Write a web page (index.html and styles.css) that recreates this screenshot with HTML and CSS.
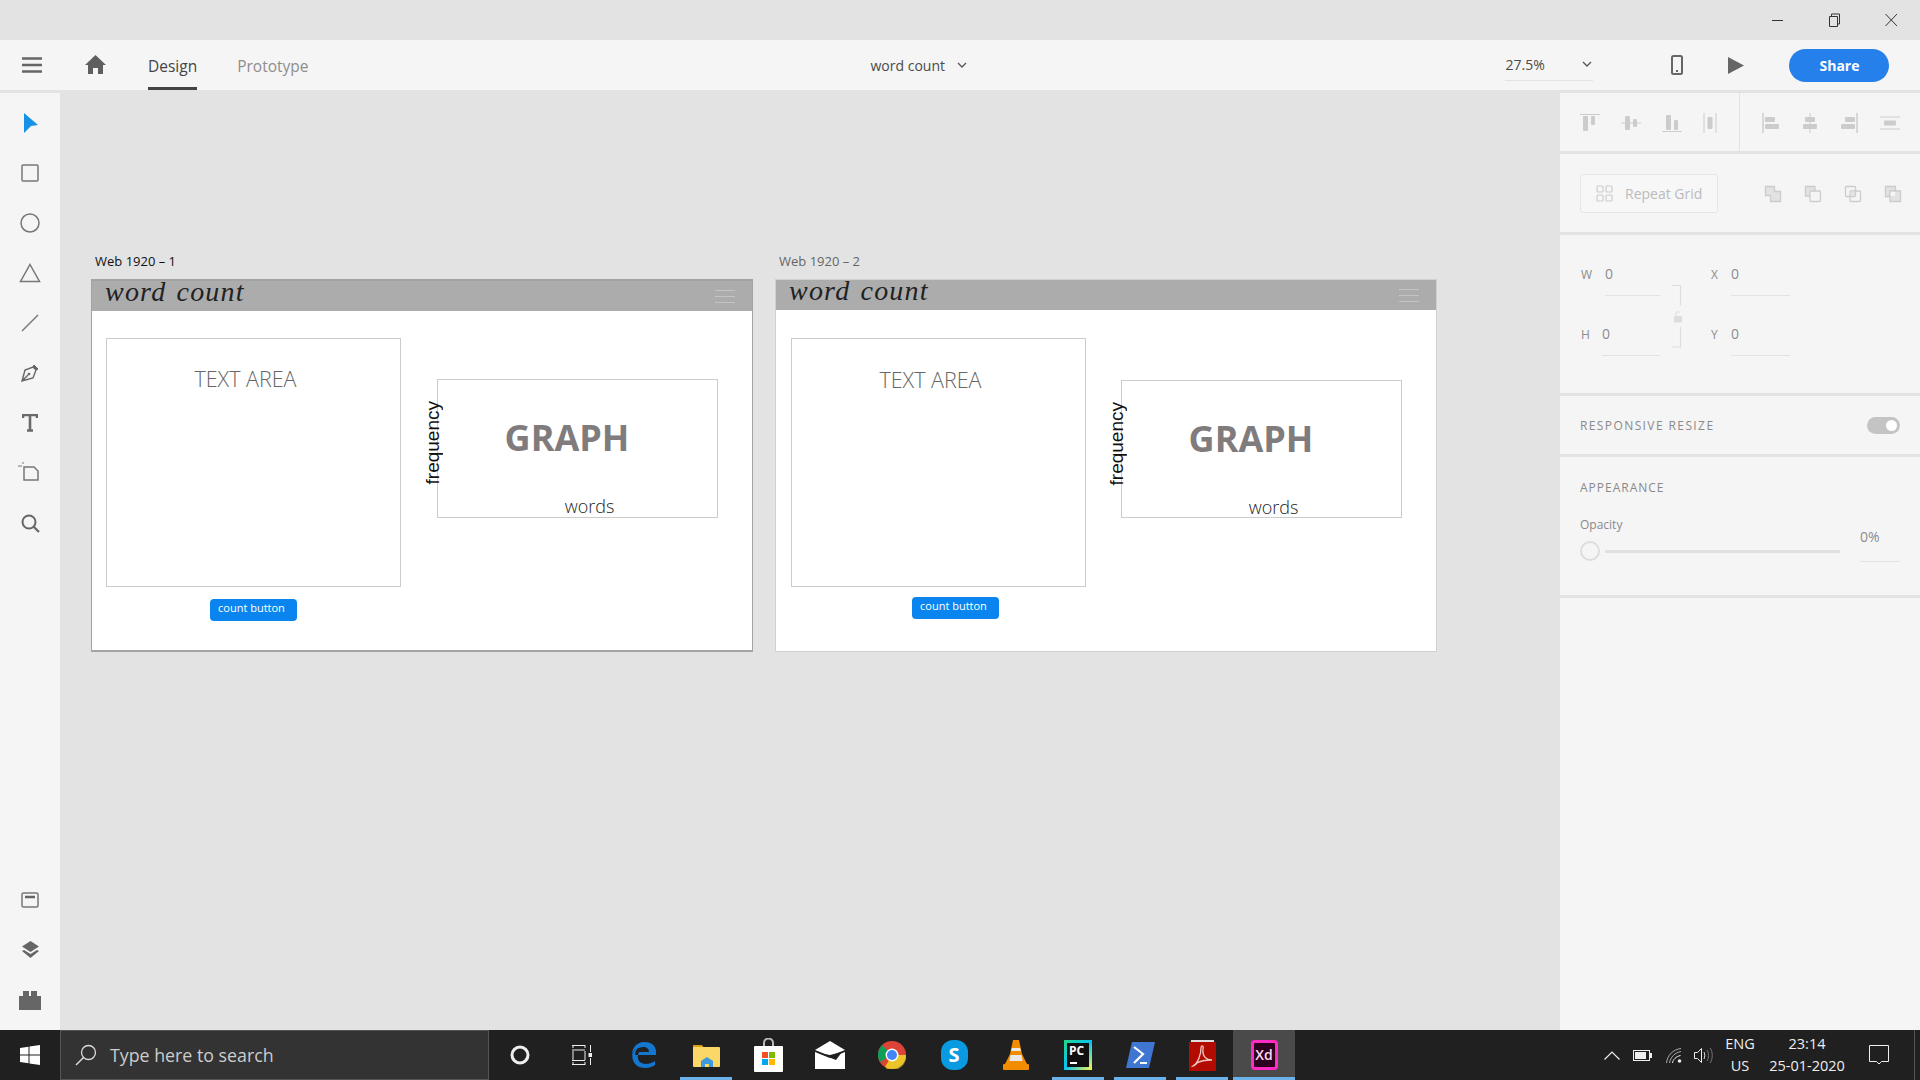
FILE: index.html
```html
<!DOCTYPE html>
<html lang="en">
<head>
    <meta charset="UTF-8">
    <title>word count - Adobe XD</title>
    <link rel="stylesheet" href="styles.css">
</head>
<body>
<div class="app">
    <div class="titlebar">
        <svg class="win-btn" width="14" height="14" viewBox="0 0 14 14"><path d="M1 7.5h11" stroke="#333" fill="none"/></svg>
        <svg class="win-btn win-restore" width="14" height="14" viewBox="0 0 14 14"><path d="M2.5 3.5h8v10h-8zM4.500 3.500v-2.500h8v10h-2" stroke="#333" fill="none"/></svg>
        <svg class="win-btn win-close" width="14" height="14" viewBox="0 0 14 14"><path d="M1.500 1l11.500 12M13 1L1.500 13" stroke="#333" fill="none"/></svg>
    </div>

    <div class="toolbar">
        <svg class="menu-icon" width="20" height="16" viewBox="0 0 20 16"><path d="M0 1.500h20M0 8h20M0 14.500h20" stroke="#666" stroke-width="2.400" fill="none"/></svg>
        <svg class="home-icon" width="21" height="19" viewBox="0 0 21 19"><path d="M10.500 0L21 10h-3v9h-5v-6H8v6H3v-9H0z" fill="#5f5f5f"/></svg>
        <div class="tab tab-active">Design</div>
        <div class="tab">Prototype</div>
        <div class="doc-title">word count
            <svg width="10" height="7" viewBox="0 0 10 7"><path d="M1 1l4 4 4-4" stroke="#555" stroke-width="1.300" fill="none"/></svg>
        </div>
        <div class="zoom-select">27.5%
            <svg width="10" height="7" viewBox="0 0 10 7"><path d="M1 1l4 4 4-4" stroke="#555" stroke-width="1.300" fill="none"/></svg>
        </div>
        <svg class="phone-icon" width="12" height="20" viewBox="0 0 12 20"><rect x="1" y="1" width="10" height="18" rx="1.500" stroke="#666" stroke-width="2" fill="none"/><path d="M5 16h2" stroke="#666" stroke-width="2"/></svg>
        <svg class="play-icon" width="16" height="17" viewBox="0 0 16 17"><path d="M0 0l16 8.500L0 17z" fill="#666"/></svg>
        <button class="share">Share</button>
    </div>

    <div class="main">
        <div class="rail">
            <div class="rail-item"><svg width="16" height="20" viewBox="0 0 16 20"><path d="M2 0l14 12-7 1-7 7z" fill="#1592e6"/></svg></div>
            <div class="rail-item"><svg width="18" height="18" viewBox="0 0 18 18"><rect x="1" y="1" width="16" height="16" rx="1" stroke="#777" stroke-width="1.500" fill="none"/></svg></div>
            <div class="rail-item"><svg width="20" height="20" viewBox="0 0 20 20"><circle cx="10" cy="10" r="9" stroke="#777" stroke-width="1.500" fill="none"/></svg></div>
            <div class="rail-item"><svg width="22" height="20" viewBox="0 0 22 20"><path d="M11 1.500l9.500 17h-19z" stroke="#777" stroke-width="1.500" fill="none"/></svg></div>
            <div class="rail-item"><svg width="18" height="18" viewBox="0 0 18 18"><path d="M1 17L17 1" stroke="#777" stroke-width="1.500" fill="none"/></svg></div>
            <div class="rail-item"><svg width="20" height="20" viewBox="0 0 20 20"><path d="M14 2l4 4-2 1-3-3z" fill="#666" stroke="#666"/><path d="M13 4l3 3-3 8-11 3 3-11zM2 18l6-6" stroke="#666" stroke-width="1.400" fill="none"/><circle cx="9" cy="11" r="1.300" fill="#666"/></svg></div>
            <div class="rail-item"><svg width="16" height="18" viewBox="0 0 16 18"><path d="M1 4V1h14v3M8 1v15M5 16.500h6" stroke="#6a6a6a" stroke-width="2.600" fill="none"/></svg></div>
            <div class="rail-item rail-artboard"><svg width="22" height="20" viewBox="0 0 22 20"><path d="M6 5h10l4 4v9H6z" stroke="#777" stroke-width="1.500" fill="none"/><path d="M0 4h4M5 0v2" stroke="#777" stroke-width="1"/></svg></div>
            <div class="rail-item"><svg width="19" height="19" viewBox="0 0 19 19"><circle cx="8" cy="8" r="6.500" stroke="#666" stroke-width="2" fill="none"/><path d="M12.500 12.500l5.500 5.500" stroke="#666" stroke-width="2.200"/></svg></div>
            <div class="rail-spacer"></div>
            <div class="rail-item"><svg width="18" height="16" viewBox="0 0 18 16"><rect x="1" y="1" width="16" height="14" rx="1.500" stroke="#777" stroke-width="1.500" fill="none"/><path d="M4 5h10" stroke="#666" stroke-width="2.500"/></svg></div>
            <div class="rail-item"><svg width="19" height="18" viewBox="0 0 19 18"><path d="M9.500 0L18 5.500 9.500 11 1 5.500z" fill="#666"/><path d="M1 10l2-1 6.500 4 6.500-4 2 1-8.500 7z" fill="#666"/></svg></div>
            <div class="rail-item"><svg width="22" height="19" viewBox="0 0 22 19"><path d="M4 5V0h6v5h2V0h6v5h4v14H0V5z" fill="#666"/></svg></div>
        </div>

        <div class="canvas">
            <div class="board-label label-one">Web 1920 – 1</div>
            <div class="board board-one">
                <div class="board-header">
                    <span class="board-title">word count</span>
                    <span class="burger"><i></i><i></i><i></i></span>
                </div>
                <div class="board-body">
                    <div class="text-col">
                        <div class="text-area"><span>TEXT AREA</span></div>
                        <div class="count-btn">count button</div>
                    </div>
                    <div class="graph">
                        <span class="freq">frequency</span>
                        <span class="graph-title">GRAPH</span>
                        <span class="graph-words">words</span>
                    </div>
                </div>
            </div>

            <div class="board-label label-two">Web 1920 – 2</div>
            <div class="board board-two">
                <div class="board-header">
                    <span class="board-title">word count</span>
                    <span class="burger"><i></i><i></i><i></i></span>
                </div>
                <div class="board-body">
                    <div class="text-col">
                        <div class="text-area"><span>TEXT AREA</span></div>
                        <div class="count-btn">count button</div>
                    </div>
                    <div class="graph">
                        <span class="freq">frequency</span>
                        <span class="graph-title">GRAPH</span>
                        <span class="graph-words">words</span>
                    </div>
                </div>
            </div>
        </div>

        <div class="panel">
            <div class="panel-sec sec-align">
                <div class="align-group">
                    <svg width="20" height="18" viewBox="0 0 20 18"><path d="M0 .500h20" stroke="#ccc"/><rect x="3" y="2" width="5" height="15" rx="1" fill="#ccc"/><rect x="11" y="2" width="4" height="9" rx="1" fill="#ccc"/></svg>
                    <svg width="20" height="18" viewBox="0 0 20 18"><path d="M0 9h20" stroke="#ccc"/><rect x="4" y="2" width="5" height="14" rx="1" fill="#ccc"/><rect x="12" y="5" width="4" height="8" rx="1" fill="#ccc"/></svg>
                    <svg width="20" height="18" viewBox="0 0 20 18"><path d="M0 17.500h20" stroke="#ccc"/><rect x="4" y="1" width="5" height="15" rx="1" fill="#ccc"/><rect x="12" y="6" width="4" height="10" rx="1" fill="#ccc"/></svg>
                    <svg width="14" height="20" viewBox="0 0 14 20"><path d="M1 0v20M13 0v20" stroke="#ccc"/><rect x="4.500" y="4" width="5" height="12" rx="1" fill="#ccc"/></svg>
                </div>
                <div class="align-group align-right">
                    <svg width="18" height="20" viewBox="0 0 18 20"><path d="M1 0v20" stroke="#ccc" stroke-width="1.500"/><rect x="3" y="4" width="10" height="5" rx="1" fill="#ccc"/><rect x="3" y="11" width="14" height="5" rx="1" fill="#ccc"/></svg>
                    <svg width="16" height="20" viewBox="0 0 16 20"><path d="M8 0v20" stroke="#ccc"/><rect x="3" y="4" width="10" height="5" rx="1" fill="#ccc"/><rect x="1" y="11" width="14" height="5" rx="1" fill="#ccc"/></svg>
                    <svg width="18" height="20" viewBox="0 0 18 20"><path d="M17 0v20" stroke="#ccc" stroke-width="1.500"/><rect x="5" y="4" width="10" height="5" rx="1" fill="#ccc"/><rect x="1" y="11" width="14" height="5" rx="1" fill="#ccc"/></svg>
                    <svg width="20" height="14" viewBox="0 0 20 14"><path d="M0 1h20M0 13h20" stroke="#ccc"/><rect x="4" y="4.500" width="12" height="5" rx="1" fill="#ccc"/></svg>
                </div>
            </div>

            <div class="panel-sec sec-grid">
                <div class="repeat-grid">
                    <svg width="17" height="17" viewBox="0 0 17 17"><g stroke="#ccc" stroke-width="1.200" fill="none"><rect x="1" y="1" width="6" height="6" rx="1"/><rect x="10" y="1" width="6" height="6" rx="1"/><rect x="1" y="10" width="6" height="6" rx="1"/><rect x="10" y="10" width="6" height="6" rx="1"/></g></svg>
                    Repeat Grid
                </div>
                <div class="bool-group">
                    <svg width="18" height="18" viewBox="0 0 18 18"><path d="M1.500 1.500h9v5h6v10h-10v-6h-5z" fill="#e2e2e2" stroke="#ccc" stroke-width="1.300"/></svg>
                    <svg width="18" height="18" viewBox="0 0 18 18"><path d="M6 11H1.500V1.500H11V6" fill="#e2e2e2" stroke="#ccc" stroke-width="1.300"/><rect x="6" y="6" width="10.500" height="10.500" rx="1" fill="#f5f5f5" stroke="#ccc" stroke-width="1.300"/></svg>
                    <svg width="18" height="18" viewBox="0 0 18 18"><g fill="none" stroke="#ccc" stroke-width="1.300"><rect x="1.500" y="1.500" width="10" height="10" rx="1"/><rect x="6" y="6" width="10.500" height="10.500" rx="1"/></g><rect x="6.500" y="6.500" width="4.500" height="4.500" fill="#e2e2e2"/></svg>
                    <svg width="18" height="18" viewBox="0 0 18 18"><path d="M1.500 1.500h10v4.500h-5.500v5.500h-4.500z" fill="#e2e2e2" stroke="#ccc" stroke-width="1.300"/><path d="M6 6h10.500v10.500h-10.500z" fill="#e2e2e2" stroke="#ccc" stroke-width="1.300"/><rect x="6.700" y="6.700" width="4.300" height="4.300" fill="#f5f5f5"/></svg>
                </div>
            </div>

            <div class="panel-sec sec-fields">
                <div class="field-col">
                    <div class="field"><span class="field-key">W</span><span class="field-val field-w">0</span></div>
                    <div class="field"><span class="field-key">H</span><span class="field-val field-h">0</span></div>
                </div>
                <svg class="lock" width="10" height="63" viewBox="0 0 10 63"><path d="M0 .500h8.500v20M0 62h8.500v-20" stroke="#ddd" stroke-width="1.200" fill="none"/><rect x="5" y="31" width="8" height="6.500" rx="1" fill="#ddd" transform="translate(-3 0)"/><path d="M4 31v-3a1.800 1.800 0 0 1 3.500 0" stroke="#ddd" fill="none"/></svg>
                <div class="field-col field-col-right">
                    <div class="field"><span class="field-key">X</span><span class="field-val">0</span></div>
                    <div class="field"><span class="field-key">Y</span><span class="field-val">0</span></div>
                </div>
            </div>

            <div class="panel-sec sec-resize">
                <span class="sec-caption caption-wide">RESPONSIVE RESIZE</span>
                <span class="toggle"><i></i></span>
            </div>

            <div class="panel-sec sec-appearance">
                <div class="sec-caption">APPEARANCE</div>
                <div class="opacity-row">
                    <div class="opacity-left">
                        <div class="opacity-label">Opacity</div>
                        <div class="slider"><span class="slider-knob"></span><span class="slider-track"></span></div>
                    </div>
                    <div class="opacity-val">0%</div>
                </div>
            </div>
        </div>
    </div>

    <div class="taskbar">
        <div class="start">
            <svg width="20" height="20" viewBox="0 0 20 20"><path d="M0 3l8.500-1.200v7.700H0zM9.500 1.600L20 0v9.500H9.500zM0 10.500h8.500v7.700L0 17zM9.500 10.500H20V20L9.500 18.400z" fill="#fff"/></svg>
        </div>
        <div class="search">
            <svg width="22" height="22" viewBox="0 0 22 22"><circle cx="13.500" cy="8.500" r="7" stroke="#ddd" stroke-width="1.300" fill="none"/><path d="M8.500 13.500L1 21" stroke="#ddd" stroke-width="1.500"/></svg>
            <span>Type here to search</span>
        </div>
        <div class="task"><svg width="20" height="20" viewBox="0 0 20 20"><circle cx="10" cy="10" r="8" stroke="#eee" stroke-width="3" fill="none"/></svg></div>
        <div class="task"><svg width="20" height="20" viewBox="0 0 20 20"><path d="M0 .500h13M0 5h13M0 15.500h13M0 19.500h13M1 6v9M13 6v9M1 0v3M13 0v3M1 17v3M13 17v3M18.500 0v7M18.500 13v7" stroke="#eee" fill="none"/><rect x="16.500" y="8" width="4" height="4" fill="#eee"/></svg></div>
        <div class="task"><svg width="24" height="26" viewBox="0 0 24 26"><path d="M12 0C5 0 1 5 0 11c3-4 7-6 11-6 4 0 6 2 6 5H7c0 0-1 3-1 3h18c1-8-3-13-12-13z" fill="#1377cf"/><path d="M6 13c-1 6 3 9 8 9 3 0 6-1 9-3v4c-3 2-6 3-10 3C5 26-1 20 .500 11 2 9 4 7 6 6c-2 2-3 5-3 7z" fill="#1377cf"/></svg></div>
        <div class="task task-on task-double"><svg width="28" height="26" viewBox="0 0 28 26"><path d="M1 3h9l2 3H1z" fill="#d9a00f"/><rect x="1" y="5" width="27" height="20" rx="1" fill="#fbd767"/><path d="M9 25v-6l6-4 6 4v6h-4v-3h-4v3z" fill="#3d9bdd"/></svg></div>
        <div class="task"><svg width="29" height="34" viewBox="0 0 29 34"><rect x="0" y="8" width="29" height="26" rx="1" fill="#fff"/><path d="M10 8V5a4.500 4.500 0 0 1 9 0v3" stroke="#bbb" stroke-width="2" fill="none"/><rect x="8" y="14" width="6" height="6" fill="#f25022"/><rect x="15" y="14" width="6" height="6" fill="#7fba00"/><rect x="8" y="21" width="6" height="6" fill="#00a4ef"/><rect x="15" y="21" width="6" height="6" fill="#ffb900"/></svg></div>
        <div class="task"><svg width="30" height="28" viewBox="0 0 30 28"><path d="M0 9L15 0l15 9-15 6z" fill="#fff"/><path d="M0 11l15 6 15-6v17H0z" fill="#fff"/><path d="M3 12l12 2 12-3-6 8z" fill="#202020"/></svg></div>
        <div class="task"><svg width="28" height="28" viewBox="0 0 28 28"><circle cx="14" cy="14" r="14" fill="#db4437"/><path d="M14 14L1.900 21A14 14 0 0 1 4 4z" fill="#0f9d58"/><path d="M14 14h14a14 14 0 0 1-21 12z" fill="#f4c20d"/><path d="M8 28l6-14h14a14 14 0 0 1-20 14z" fill="#e5c43a" opacity=".6"/><circle cx="14" cy="14" r="6.500" fill="#fff"/><circle cx="14" cy="14" r="5" fill="#4285f4"/></svg></div>
        <div class="task"><div class="skype">S</div></div>
        <div class="task"><svg width="26" height="30" viewBox="0 0 26 30"><path d="M10 0h6l3 14 5 10H2l5-10z" fill="#f28c00"/><path d="M9 8h8l1 3H8zM7.500 15h11l1 6h-13z" fill="#e9e9e9"/><rect x="0" y="24" width="26" height="6" rx="1" fill="#f28c00"/></svg></div>
        <div class="task task-on"><div class="pycharm"><span>PC</span><i></i></div></div>
        <div class="task task-on"><svg width="29" height="26" viewBox="0 0 29 26"><path d="M6 0h23l-6 26H0z" fill="#3e76d2"/><path d="M8 5l9 7-9 9" stroke="#fff" stroke-width="2.200" fill="none"/><path d="M14 21h7" stroke="#fff" stroke-width="2"/></svg></div>
        <div class="task task-on"><svg width="27" height="31" viewBox="0 0 27 31"><path d="M2 0h23v2H2z" fill="#ddd"/><rect x="0" y="2" width="27" height="29" rx="1" fill="#b30b00"/><path d="M4 26c5-3 8-11 8-18 0-3 3-3 2 1-1 7 3 11 9 11-6 0-12 1-15 3-2 2-3 3-4 3z" stroke="#f0c8c0" stroke-width="1.300" fill="none"/></svg></div>
        <div class="task task-on task-active"><div class="xd">Xd</div></div>

        <div class="tray">
            <svg class="tray-chevron" width="16" height="9" viewBox="0 0 16 9"><path d="M.5 8.500L8 1l7.500 7.500" stroke="#eee" stroke-width="1.200" fill="none"/></svg>
            <svg class="tray-battery" width="19" height="11" viewBox="0 0 19 11"><rect x=".5" y=".5" width="16" height="10" stroke="#eee" fill="none"/><rect x="2" y="2" width="11" height="7" fill="#eee"/><rect x="17" y="3" width="2" height="5" fill="#eee"/></svg>
            <svg class="tray-wifi" width="16" height="15" viewBox="0 0 16 15"><g stroke="#aaa" fill="none"><path d="M.5 15C1.500 7 7 1.500 15 .5"/><path d="M3.500 15C4.500 9 9 4.500 15 3.500"/></g><g stroke="#eee" fill="none"><path d="M6.500 15c.5-3.500 3.500-6.500 8-7.500"/></g><circle cx="13.500" cy="13" r="1.800" fill="#eee"/></svg>
            <svg class="tray-speaker" width="20" height="17" viewBox="0 0 20 17"><path d="M.5 5.500h3l4-4v14l-4-4h-3z" stroke="#eee" fill="none"/><path d="M10 5c1 2 1 5 0 7" stroke="#eee" fill="none"/><path d="M13 3c2 3 2 8 0 11M16 1c3 4 3 11 0 15" stroke="#777" fill="none"/></svg>
            <div class="tray-lang"><div>ENG</div><div>US</div></div>
            <div class="tray-clock"><div>23:14</div><div>25-01-2020</div></div>
            <svg class="tray-note" width="20" height="20" viewBox="0 0 20 20"><path d="M.5 .5h19v16h-7l-2.500 2.500L7.500 16.500H.5z" stroke="#eee" fill="none"/></svg>
            <span class="tray-edge"></span>
        </div>
    </div>
</div>
</body>
</html>
```

FILE: styles.css
```css
* {
    box-sizing: border-box;
}
html, body {
    margin: 0;
    padding: 0;
    width: 100%;
    height: 100%;
    overflow: hidden;
}
body {
    font-family: "Open Sans", "Noto Sans", Arial, sans-serif;
    background-color: #e3e3e3;
    color: #444;
}
svg {
    display: block;
    flex: none;
}
.app {
    display: flex;
    flex-direction: column;
    height: 1080px;
}

/* window title bar */
.titlebar {
    height: 40px;
    background-color: #e3e3e3;
    display: flex;
    align-items: center;
    justify-content: flex-end;
    padding: 0 22px 0 0;
}
.win-btn {
    margin-top: -1px;
}
.win-restore {
    margin-left: 42px;
}
.win-close {
    margin-left: 43px;
}

/* xd toolbar */
.toolbar {
    height: 50px;
    background-color: #f5f5f5;
    display: flex;
    align-items: center;
    padding-left: 22px;
}
.home-icon {
    margin-left: 43px;
    margin-top: -2px;
}
.tab {
    font-size: 15.5px;
    color: #8e8e8e;
    margin-left: 40px;
    height: 50px;
    line-height: 52px;
}
.tab-active {
    color: #444;
    margin-left: 42px;
    border-bottom: 3px solid #444;
}
.doc-title {
    font-size: 14px;
    color: #4a4a4a;
    margin-left: 562px;
    width: 100px;
    display: flex;
    align-items: center;
    gap: 12px;
    white-space: nowrap;
}
.zoom-select {
    font-size: 14px;
    color: #4a4a4a;
    margin-left: 535px;
    width: 88px;
    height: 32px;
    border-bottom: 1px solid #e3e3e3;
    display: flex;
    justify-content: space-between;
    align-items: center;
    margin-top: -1px;
}
.zoom-select svg {
    margin-right: 1px;
}
.phone-icon {
    margin-left: 78px;
}
.play-icon {
    margin-left: 45px;
}
.share {
    margin-left: 45px;
    width: 100px;
    height: 33px;
    border: none;
    border-radius: 17px;
    background-color: #2680eb;
    color: white;
    font-family: inherit;
    font-size: 14px;
    font-weight: 700;
}

/* main area */
.main {
    flex: 1;
    display: flex;
    margin-top: 3px;
    min-height: 0;
}
.rail {
    width: 60px;
    background-color: #f5f5f5;
    display: flex;
    flex-direction: column;
    padding: 5px 0;
}
.rail-item {
    height: 50px;
    display: flex;
    align-items: center;
    justify-content: center;
}
.rail-artboard svg {
    margin-top: -3px;
    margin-left: -2px;
}
.rail-spacer {
    flex: 1;
}
.canvas {
    flex: 1;
    position: relative;
    background-color: #e3e3e3;
}

/* artboards sit at free places on the canvas */
.board-label {
    position: absolute;
    font-size: 13px;
    line-height: 18px;
    white-space: nowrap;
}
.label-one {
    left: 35px;
    top: 159px;
    color: #111;
}
.label-two {
    left: 719px;
    top: 159px;
    color: #666;
}
.board {
    position: absolute;
    width: 662px;
    height: 373px;
    top: 186px;
    background-color: white;
    display: flex;
    flex-direction: column;
}
.board-one {
    left: 31px;
    border: 1px solid #a3a3a3;
    border-top-width: 2px;
    border-bottom-width: 2px;
}
.board-two {
    left: 715px;
    border: 1px solid #d0d0d0;
}
.board-header {
    height: 30px;
    flex: none;
    background-color: #acacad;
    display: flex;
    align-items: center;
    justify-content: space-between;
    padding: 0 17px 0 13px;
}
.board-title {
    font-family: "Liberation Serif", "DejaVu Serif", serif;
    font-style: italic;
    font-size: 28px;
    letter-spacing: 1.2px;
    word-spacing: 2px;
    color: #222;
    line-height: 30px;
    margin-top: -9px;
    white-space: nowrap;
}
.burger {
    display: flex;
    flex-direction: column;
    gap: 5px;
    width: 20px;
}
.burger i {
    display: block;
    height: 1px;
    background-color: #c4c4c4;
}
.board-body {
    flex: 1;
    display: flex;
    align-items: flex-start;
    padding: 27px 0 0 14px;
}
.board-two .board-body {
    padding-top: 28px;
    padding-left: 15px;
}
.text-col {
    width: 295px;
    flex: none;
    display: flex;
    flex-direction: column;
}
.text-area {
    height: 249px;
    border: 1px solid #ccc;
    text-align: center;
    padding: 25px 16px 0 0;
    font-size: 21.5px;
    font-weight: 300;
    color: #666;
}
.board-two .text-area {
    padding-top: 26px;
}
.count-btn {
    align-self: center;
    margin-top: 12px;
    width: 87px;
    height: 22px;
    border-radius: 4px;
    background-color: #0a84ee;
    color: white;
    font-size: 11px;
    line-height: 17px;
    padding-left: 8px;
    white-space: nowrap;
}
.board-two .count-btn {
    margin-top: 10px;
    margin-left: 34px;
}
.graph {
    position: relative;
    width: 281px;
    height: 139px;
    margin: 41px 0 0 36px;
    border: 1px solid #ccc;
    text-align: center;
}
.board-two .graph {
    margin-top: 42px;
    margin-left: 35px;
    height: 138px;
}
.graph-title {
    display: block;
    font-size: 36px;
    font-weight: 700;
    color: #807b7c;
    line-height: 46px;
    margin: 35px 21px 0 0;
}
.graph-words {
    display: block;
    font-size: 18px;
    font-weight: 300;
    color: #222;
    line-height: 24px;
    margin: 33px 0 0 24px;
}
.freq {
    position: absolute;
    left: -13px;
    top: 21px;
    font-family: "Liberation Sans", Arial, sans-serif;
    font-size: 19px;
    line-height: 16px;
    color: #111;
    writing-mode: vertical-rl;
    transform: rotate(180deg);
}

/* right panel */
.panel {
    width: 360px;
    background-color: #f5f5f5;
    display: flex;
    flex-direction: column;
}
.panel-sec {
    border-bottom: 3px solid #e3e3e3;
}
.sec-align {
    height: 61px;
    display: flex;
}
.align-group {
    width: 179px;
    display: flex;
    align-items: center;
    justify-content: space-between;
    padding: 2px 22px 0 20px;
}
.align-right {
    width: 181px;
    border-left: 1px solid #e3e3e3;
    padding: 2px 20px 0 22px;
}
.sec-grid {
    height: 81px;
    display: flex;
    align-items: center;
    padding: 1px 18px 0 20px;
    justify-content: space-between;
}
.repeat-grid {
    width: 138px;
    height: 39px;
    border: 1px solid #e6e6e6;
    border-radius: 3px;
    background-color: #f7f7f7;
    color: #bbb;
    font-size: 14px;
    display: flex;
    align-items: center;
    gap: 12px;
    padding-left: 15px;
    white-space: nowrap;
}
.bool-group {
    display: flex;
    gap: 22px;
}
.sec-fields {
    height: 161px;
    display: flex;
    padding: 28px 0 0 21px;
}
.field-col {
    width: 82px;
    display: flex;
    flex-direction: column;
    gap: 19px;
}
.field {
    display: flex;
    align-items: baseline;
    height: 41px;
    color: #8c8c8c;
}
.field-key {
    font-size: 12px;
    width: 24px;
    flex: none;
}
.field-val {
    flex: 1;
    font-size: 14px;
    line-height: 22px;
    height: 33px;
    border-bottom: 1px solid #e3e3e3;
}
.field-h {
    margin-left: -3px;
}
.field-col:first-child {
    width: 79px;
}
.lock {
    margin: 22px 0 0 12px;
}
.field-col-right {
    width: 79px;
    margin-left: 29px;
}
.field-col-right .field-key {
    width: 20px;
}
.sec-resize {
    height: 61px;
    display: flex;
    align-items: center;
    justify-content: space-between;
    padding: 0 20px;
}
.sec-caption {
    font-size: 12px;
    letter-spacing: 1px;
    color: #8a8a8a;
}
.caption-wide {
    letter-spacing: 1.4px;
}
.toggle {
    width: 33px;
    height: 17px;
    border-radius: 9px;
    background-color: #c4c4c4;
    display: flex;
    align-items: center;
    justify-content: flex-end;
    padding-right: 3px;
}
.toggle i {
    display: block;
    width: 11px;
    height: 11px;
    border-radius: 50%;
    background-color: white;
}
.sec-appearance {
    height: 141px;
    padding: 22px 20px 0 20px;
}
.opacity-row {
    display: flex;
    margin-top: 20px;
}
.opacity-left {
    width: 260px;
}
.opacity-label {
    font-size: 12px;
    color: #8a8a8a;
    line-height: 18px;
}
.slider {
    display: flex;
    align-items: center;
    gap: 5px;
    margin-top: 7px;
}
.slider-knob {
    width: 20px;
    height: 20px;
    border-radius: 50%;
    border: 2px solid #ddd;
    background-color: #f5f5f5;
}
.slider-track {
    width: 235px;
    height: 3px;
    background-color: #e0e0e0;
}
.opacity-val {
    width: 40px;
    height: 36px;
    margin-left: 20px;
    margin-top: 10px;
    font-size: 14px;
    line-height: 22px;
    color: #8c8c8c;
    border-bottom: 1px solid #e3e3e3;
}

/* windows taskbar */
.taskbar {
    height: 50px;
    flex: none;
    background-color: #202020;
    display: flex;
    align-items: center;
}
.start {
    width: 60px;
    height: 50px;
    flex: none;
    display: flex;
    align-items: center;
    justify-content: center;
}
.search {
    width: 429px;
    height: 50px;
    flex: none;
    background-color: #333;
    border: 1px solid #555;
    display: flex;
    align-items: center;
    padding-left: 14px;
    gap: 13px;
    color: #ccc;
    font-size: 17.8px;
}
.task {
    width: 62px;
    height: 50px;
    flex: none;
    display: flex;
    align-items: center;
    justify-content: center;
    position: relative;
}
.task-on::after {
    content: "";
    position: absolute;
    left: 5px;
    right: 5px;
    bottom: 0;
    height: 3px;
    background-color: #6cb2ea;
}
.task-active {
    background-color: #4a4a4a;
}
.task-active::after {
    left: 0;
    right: 0;
}
.skype {
    width: 27px;
    height: 30px;
    border-radius: 12px;
    background-color: #0a9ae2;
    color: white;
    font-weight: 700;
    font-size: 20px;
    line-height: 30px;
    text-align: center;
}
.pycharm {
    width: 28px;
    height: 30px;
    background: linear-gradient(135deg, #21d789 0%, #07c3f2 50%, #fcf84a 100%);
    padding: 3px;
    position: relative;
    color: white;
    font-size: 12px;
    font-weight: 700;
    line-height: 15px;
}
.pycharm span {
    display: block;
    background-color: #111;
    height: 24px;
    padding-left: 2px;
}
.pycharm i {
    position: absolute;
    left: 6px;
    bottom: 6px;
    width: 7px;
    height: 2px;
    background-color: white;
}
.xd {
    width: 27px;
    height: 30px;
    border: 3px solid #ff2bc2;
    border-radius: 4px;
    background-color: #2e001f;
    color: #ffd9f2;
    font-size: 14px;
    font-weight: 600;
    line-height: 24px;
    text-align: center;
}
.tray {
    flex: 1;
    display: flex;
    align-items: center;
    height: 50px;
    color: #eee;
    font-size: 14.5px;
    padding-left: 309px;
}
.tray-battery {
    margin-left: 13px;
}
.tray-wifi {
    margin-left: 14px;
}
.tray-speaker {
    margin-left: 12px;
}
.tray-lang {
    width: 40px;
    margin-left: 6px;
    text-align: center;
    line-height: 22px;
}
.tray-clock {
    width: 80px;
    margin-left: 7px;
    text-align: center;
    line-height: 22px;
    white-space: nowrap;
}
.tray-note {
    margin-left: 22px;
}
.tray-edge {
    width: 1px;
    height: 50px;
    background-color: #555;
    margin-left: 25px;
}
```
